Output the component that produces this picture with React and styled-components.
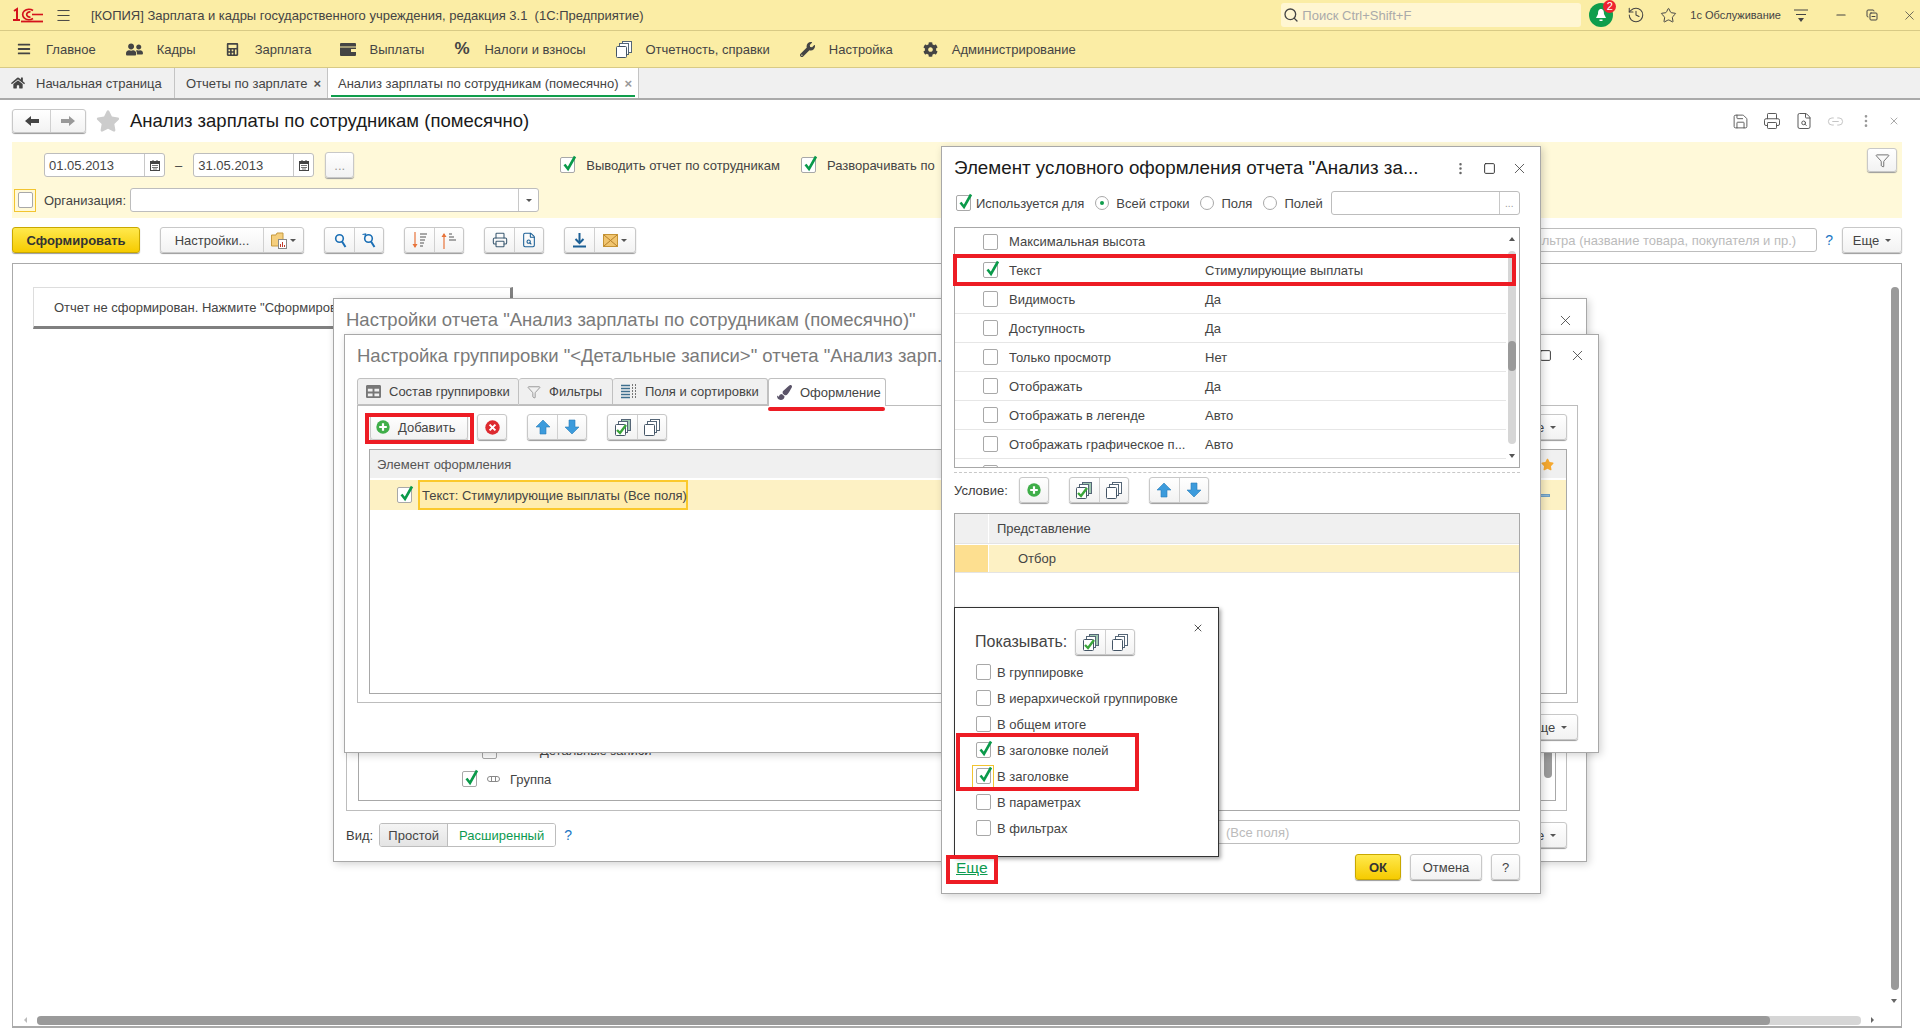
import React from 'react'
import styled, { createGlobalStyle } from 'styled-components'
import { FaBars, FaUserFriends, FaCalculator, FaWrench, FaCog, FaHome, FaStar, FaPaintBrush, FaTable } from 'react-icons/fa'
import { Search, History, Star, Printer, FileSearch, Link2, MoreVertical, X, Minus, Filter, Square, Menu, Save, CopyMinus } from 'lucide-react'

const GlobalStyle = createGlobalStyle`
  html, body { margin: 0; padding: 0; background: #fff; }
  body { font-family: "Liberation Sans", Arial, sans-serif; font-size: 13px; color: #3c3c3c; }
  * { box-sizing: border-box; }
`

const Page = styled.div`
  position: relative;
  width: 1920px;
  height: 1028px;
  overflow: hidden;
  background: #fff;
  display: flex;
  flex-direction: column;
`

/* ---------- верхние панели ---------- */
const TitleBar = styled.div`
  height: 31px;
  flex: none;
  background: #fbeda5;
  border-bottom: 1px solid #d8ca85;
  display: flex;
  align-items: center;
  padding-left: 12px;
  color: #444;
`
const TitleText = styled.span`
  margin-left: 19px;
  white-space: pre;
`
const TitleSearch = styled.div`
  margin-left: auto;
  width: 300px;
  height: 24px;
  background: #fff6d2;
  border-radius: 3px;
  display: flex;
  align-items: center;
  gap: 3px;
  padding-left: 2px;
  color: #aaa;
`
const TitleIcons = styled.div`
  display: flex;
  align-items: center;
  height: 100%;
  color: #444;
  margin-left: 8px;
`
const Bell = styled.div`
  position: relative;
  width: 24px;
  height: 24px;
  border-radius: 50%;
  background: #0f9d4c;
  display: flex;
  align-items: center;
  justify-content: center;
`
const Badge = styled.span`
  position: absolute;
  top: -3px;
  right: -3px;
  width: 13px;
  height: 13px;
  border-radius: 50%;
  background: #ee2230;
  color: #fff;
  font-size: 11px;
  line-height: 13px;
  text-align: center;
`
const Slot = styled.span`
  display: inline-flex;
  align-items: center;
  justify-content: center;
  margin-left: ${p => p.$ml || 0}px;
  width: ${p => (p.$w ? p.$w + 'px' : 'auto')};
  font-size: ${p => p.$fs || 13}px;
  white-space: nowrap;
`
const MenuBar = styled.div`
  height: 37px;
  flex: none;
  background: #fbeda5;
  border-bottom: 1px solid #d8ca85;
  display: flex;
  align-items: center;
  padding-left: 17px;
  color: #444;
`
const MenuItem = styled.div`
  display: flex;
  align-items: center;
  gap: ${p => p.$gap || 14}px;
  margin-right: ${p => p.$mr || 30}px;
  color: #444;
`
const Percent = styled.span`
  font-size: 17px;
  font-weight: bold;
  width: 16px;
`
const TabBar = styled.div`
  height: 32px;
  flex: none;
  background: #f0f0f0;
  border-bottom: 2px solid #aaa;
  display: flex;
`
const PageTab = styled.div`
  position: relative;
  width: ${p => p.$w}px;
  display: flex;
  align-items: center;
  padding-left: ${p => p.$pl}px;
  gap: ${p => p.$gap}px;
  background: ${p => (p.$active ? '#fff' : 'transparent')};
  border-right: 1px solid #c4c4c4;
  color: #444;
  white-space: nowrap;
  ${p => p.$active && `
    &::after {
      content: "";
      position: absolute;
      left: 3px; right: 3px; bottom: 1px;
      height: 2px;
      background: #0f9d4c;
    }
  `}
`
const TabClose = styled.span`
  font-size: 13px;
  color: ${p => p.$dim ? '#999' : '#555'};
  font-weight: bold;
`

/* ---------- форма отчета ---------- */
const Form = styled.div`
  flex: 1;
  min-height: 0;
  display: flex;
  flex-direction: column;
  padding-left: 12px;
  padding-right: 18px;
`
const FormHead = styled.div`
  height: 42px;
  flex: none;
  display: flex;
  align-items: center;
`
const FormTitle = styled.div`
  font-size: 18.5px;
  color: #1a1a1a;
  margin-left: 10px;
`
const HeadTools = styled.div`
  margin-left: auto;
  display: flex;
  align-items: center;
  gap: 14px;
  color: #555;
  padding-right: 2px;
`
const Btn = styled.div`
  height: ${p => p.$h || 26}px;
  width: ${p => (p.$w ? p.$w + 'px' : 'auto')};
  flex: none;
  display: inline-flex;
  align-items: center;
  justify-content: ${p => p.$start ? 'flex-start' : 'center'};
  padding-left: ${p => p.$start ? 5 : 0}px;
  margin-left: ${p => p.$ml || 0}px;
  background: linear-gradient(#fff, #f2f2f2);
  border: 1px solid #c8c8c8;
  border-radius: 3px;
  box-shadow: 0 1px 1px #9a9a9a;
  color: #444;
  white-space: nowrap;
`
const YellowBtn = styled(Btn)`
  background: linear-gradient(#ffe94d, #f6cb00);
  border-color: #c9a800;
  color: #333;
  font-weight: bold;
`
const PanelFilterBtn = styled(Btn)`
  margin-top: -4px;
  margin-right: 5px;
`
const BtnGroup = styled.div`
  display: inline-flex;
  flex: none;
  height: ${p => p.$h || 26}px;
  margin-left: ${p => p.$ml || 0}px;
  background: linear-gradient(#fff, #f2f2f2);
  border: 1px solid #c8c8c8;
  border-radius: 3px;
  box-shadow: 0 1px 1px #9a9a9a;
  & > * + * { border-left: 1px solid #d0d0d0; }
`
const GroupCell = styled.div`
  width: ${p => p.$w || 29}px;
  display: flex;
  align-items: center;
  justify-content: center;
  gap: 3px;
  color: #444;
  white-space: nowrap;
`
const DropCaret = styled.span`
  display: inline-block;
  width: 0;
  height: 0;
  border-left: 3px solid transparent;
  border-right: 3px solid transparent;
  border-top: 3px solid #555;
  margin-left: ${p => p.$ml || 0}px;
`
const FilterPanel = styled.div`
  height: 76px;
  flex: none;
  background: #fff9d9;
  display: flex;
  padding-top: 10px;
`
const FilterCol = styled.div`
  display: flex;
  flex-direction: column;
  gap: 10px;
`
const FilterRow = styled.div`
  display: flex;
  align-items: center;
  height: ${p => p.$h}px;
`
const Input = styled.div`
  height: 24px;
  width: ${p => (p.$w ? p.$w + 'px' : 'auto')};
  margin-left: ${p => p.$ml || 0}px;
  flex: none;
  background: #fff;
  border: 1px solid #bdbdbd;
  border-radius: 3px;
  display: flex;
  align-items: center;
  color: #444;
  overflow: hidden;
`
const InputText = styled.span`
  flex: 1;
  padding-left: ${p => p.$pl ?? 4}px;
  color: ${p => p.$color || '#444'};
  white-space: nowrap;
  text-align: ${p => p.$right ? 'right' : 'left'};
  padding-right: ${p => p.$right ? 20 : 0}px;
`
const InputEnd = styled.span`
  width: 20px;
  height: 100%;
  border-left: 1px solid #c8c8c8;
  display: flex;
  align-items: center;
  justify-content: center;
  color: #999;
  font-size: 10px;
`
const Box = styled.span`
  position: relative;
  display: inline-block;
  flex: none;
  width: 15px;
  height: 16px;
  margin-left: ${p => p.$ml || 0}px;
  background: #fff;
  border: 1px solid #a8a8a8;
  border-radius: 2px;
`
const BoxCheck = styled.svg`
  position: absolute;
  left: 1px;
  top: -3px;
`
const Label = styled.span`
  margin-left: ${p => p.$ml ?? 0}px;
  color: ${p => p.$color || '#444'};
  white-space: nowrap;
`
const FocusRing = styled.span`
  width: 22px;
  height: 23px;
  margin-left: 2px;
  display: flex;
  align-items: center;
  justify-content: center;
  border: 1px solid #f2c430;
`
const CommandBar = styled.div`
  height: 26px;
  flex: none;
  margin-top: 9px;
  display: flex;
  align-items: center;
`
const ReportArea = styled.div`
  position: relative;
  flex: 1;
  margin-top: 10px;
  border: 1px solid #aaa;
  border-bottom: 2px solid #aaa;
  padding: 23px 0 0 20px;
`
const Message = styled.div`
  width: 480px;
  height: 42px;
  background: #fff;
  border: 1px solid #ddd;
  border-right: 3px solid #808080;
  border-bottom: 3px solid #808080;
  display: flex;
  align-items: center;
  padding-left: 20px;
  color: #444;
  white-space: nowrap;
`
const VScroll = styled.div`
  position: absolute;
  top: 23px;
  right: 2px;
  bottom: 36px;
  width: 8px;
  border-radius: 4px;
  background: #9a9a9a;
`
const HScroll = styled.div`
  position: absolute;
  left: 24px;
  right: 40px;
  bottom: 1px;
  height: 9px;
  border-radius: 4px;
  background: #d6d6d6;
  &::before {
    content: "";
    position: absolute;
    left: 0;
    top: 0;
    bottom: 0;
    width: 1733px;
    border-radius: 4px;
    background: #9a9a9a;
  }
`
const ScrollTip = styled.span`
  position: absolute;
  width: 0;
  height: 0;
  ${p => p.$dir === 'down' && `
    right: 4px; bottom: 23px;
    border-left: 3px solid transparent;
    border-right: 3px solid transparent;
    border-top: 4px solid #666;
  `}
  ${p => p.$dir === 'left' && `
    left: 11px; bottom: 3px;
    border-top: 3px solid transparent;
    border-bottom: 3px solid transparent;
    border-right: 3px solid #bbb;
  `}
  ${p => p.$dir === 'right' && `
    right: 27px; bottom: 3px;
    border-top: 3px solid transparent;
    border-bottom: 3px solid transparent;
    border-left: 3px solid #666;
  `}
`

/* ---------- окна ---------- */
const Window = styled.div`
  position: absolute;
  left: ${p => p.$x}px;
  top: ${p => p.$y}px;
  width: ${p => p.$w}px;
  height: ${p => p.$h}px;
  background: #fff;
  border: 1px solid #a8a8a8;
  box-shadow: 2px 2px 8px rgba(0, 0, 0, 0.18);
  display: flex;
  flex-direction: column;
`
const WinHead = styled.div`
  height: ${p => p.$h || 44}px;
  flex: none;
  display: flex;
  align-items: center;
  padding-left: 12px;
  padding-right: 12px;
  padding-bottom: 2px;
`
const WinTitle = styled.div`
  font-size: ${p => p.$size || 18.5}px;
  white-space: nowrap;
  color: ${p => p.$dim ? '#7a7a7a' : '#1a1a1a'};
`
const WinTools = styled.div`
  margin-left: auto;
  display: flex;
  align-items: center;
  gap: ${p => p.$gap || 14}px;
  color: #333;
`
const OuterPanel = styled.div`
  flex: 1;
  margin: 0 19px 0 12px;
  padding: 0 10px 9px 11px;
  border: 1px solid #bdbdbd;
  border-top: none;
  display: flex;
`
const InnerPanel = styled.div`
  position: relative;
  flex: 1;
  border: 1px solid #a8a8a8;
  border-top: none;
  display: flex;
  flex-direction: column;
  justify-content: flex-end;
  padding-bottom: 7px;
`
const TreeRow = styled.div`
  height: ${p => p.$h || 29}px;
  display: flex;
  align-items: center;
  padding-left: ${p => p.$pl}px;
  gap: ${p => p.$gap}px;
  color: #444;
`
const SmallScroll = styled.div`
  position: absolute;
  right: 3px;
  bottom: 22px;
  width: 8px;
  height: 60px;
  border-radius: 4px;
  background: #9a9a9a;
`
const BottomRow = styled.div`
  height: 50px;
  flex: none;
  display: flex;
  align-items: center;
  padding: 0 ${p => p.$pr || 19}px 2px 12px;
`
const Switch = styled.div`
  display: flex;
  height: 24px;
  margin-left: 6px;
  border: 1px solid #bdbdbd;
  border-radius: 3px;
  overflow: hidden;
`
const SwitchPart = styled.div`
  width: ${p => p.$w}px;
  display: flex;
  align-items: center;
  justify-content: center;
  color: ${p => p.$on ? '#0d9a50' : '#444'};
  background: ${p => p.$on ? '#fff' : 'linear-gradient(#f4f4f4, #e4e4e4)'};
  border-right: ${p => p.$on ? 'none' : '1px solid #bdbdbd'};
`
const Help = styled.span`
  margin-left: 8px;
  font-size: 14px;
  color: #1b76c4;
`
const Push = styled.span`
  margin-left: auto;
`

const DlgTabs = styled.div`
  height: 27px;
  flex: none;
  display: flex;
  margin-left: 12px;
`
const DlgTab = styled.div`
  width: ${p => p.$w}px;
  display: flex;
  align-items: center;
  gap: 8px;
  padding-left: 8px;
  color: #444;
  background: ${p => p.$active ? '#fff' : '#f0f0f0'};
  border: 1px solid #c0c0c0;
  border-bottom: ${p => p.$active ? 'none' : '1px solid #c0c0c0'};
  border-left: ${p => p.$first || p.$active ? '1px solid #c0c0c0' : 'none'};
  border-radius: 3px 3px 0 0;
  margin-bottom: ${p => p.$active ? '-1px' : 0};
  position: relative;
  z-index: 1;
`
const TabPanel = styled.div`
  width: 1221px;
  height: 298px;
  flex: none;
  margin-left: 12px;
  border: 1px solid #bdbdbd;
  padding: 8px 10px 8px 11px;
  display: flex;
  flex-direction: column;
`
const Toolbar = styled.div`
  height: 26px;
  flex: none;
  display: flex;
  align-items: center;
`
const Table = styled.div`
  flex: 1;
  margin-top: 9px;
  border: 1px solid #a8a8a8;
  display: flex;
  flex-direction: column;
`
const HeadRow = styled.div`
  height: 29px;
  flex: none;
  background: #f0f0f0;
  display: flex;
  align-items: center;
  padding-left: 7px;
  padding-right: 12px;
  color: #555;
  border-bottom: 1px solid #fff;
`
const SelRow = styled.div`
  height: 30px;
  flex: none;
  margin-top: 1px;
  background: #fdf1c4;
  display: flex;
  align-items: center;
  color: #444;
  padding-right: 16px;
`
const ActiveCell = styled.div`
  width: 270px;
  height: 100%;
  margin-left: 6px;
  display: flex;
  align-items: center;
  padding-left: 2px;
  background: #ffedae;
  border: 2px solid #fbc92c;
  white-space: nowrap;
`
const MinusBar = styled.span`
  margin-left: auto;
  width: 12px;
  height: 3px;
  background: #8db8d8;
  border: 1px solid #6fa0c5;
`

/* ---------- окно условного оформления ---------- */
const DlgBody = styled.div`
  flex: 1;
  min-height: 0;
  padding: 0 20px 0 12px;
  display: flex;
  flex-direction: column;
`
const UseRow = styled.div`
  height: 24px;
  flex: none;
  display: flex;
  align-items: center;
`
const Radio = styled.span`
  flex: none;
  width: 14px;
  height: 14px;
  margin-left: ${p => p.$ml || 0}px;
  border-radius: 50%;
  border: 1px solid #a8a8a8;
  background: #fff;
  display: flex;
  align-items: center;
  justify-content: center;
  &::after {
    content: "";
    display: ${p => p.$on ? 'block' : 'none'};
    width: 4px;
    height: 4px;
    border-radius: 50%;
    background: #0f9d4c;
  }
`
const PropTable = styled.div`
  position: relative;
  height: 241px;
  flex: none;
  margin-top: 12px;
  border: 1px solid #a8a8a8;
  overflow: hidden;
`
const PropRow = styled.div`
  height: 29px;
  display: grid;
  grid-template-columns: 26px 196px 1fr;
  align-items: center;
  margin-right: 13px;
  padding-left: 28px;
  border-bottom: 1px solid ${p => p.$plain ? 'transparent' : '#e6e6e6'};
  color: #444;
  white-space: nowrap;
  &:first-child { height: 28px; }
`
const ScrollTrack = styled.div`
  position: absolute;
  right: 3px;
  top: 23px;
  bottom: 23px;
  width: 8px;
  border-radius: 4px;
  background: #d6d6d6;
  &::after {
    content: "";
    position: absolute;
    left: 0;
    right: 0;
    top: 90px;
    height: 30px;
    border-radius: 4px;
    background: #9a9a9a;
  }
`
const ArrowTip = styled.span`
  position: absolute;
  right: 4px;
  ${p => p.$up ? 'top: 9px;' : 'bottom: 9px;'}
  width: 0;
  height: 0;
  border-left: 3px solid transparent;
  border-right: 3px solid transparent;
  ${p => p.$up ? 'border-bottom: 4px solid #555;' : 'border-top: 4px solid #555;'}
`
const DashLine = styled.div`
  height: 0;
  flex: none;
  margin-top: 4px;
  border-top: 1px dashed #c8c8c8;
`
const CondRow = styled.div`
  height: 26px;
  flex: none;
  margin-top: 4px;
  display: flex;
  align-items: center;
`
const CondTable = styled.div`
  height: 298px;
  flex: none;
  margin-top: 10px;
  border: 1px solid #a8a8a8;
`
const CondCells = styled.div`
  height: ${p => p.$h}px;
  margin-top: ${p => p.$mt || 0}px;
  display: grid;
  grid-template-columns: 33px 1fr;
  column-gap: 1px;
  align-items: stretch;
  border-bottom: 1px solid #e4e4e4;
`
const Cell = styled.div`
  display: flex;
  align-items: center;
  padding-left: ${p => p.$pl || 0}px;
  background: ${p => p.$bg};
  color: #444;
`
const ResultInput = styled(Input)`
  margin-top: 9px;
  padding-left: 271px;
`
const DlgFooter = styled.div`
  height: 26px;
  flex: none;
  margin-top: 10px;
  display: flex;
  align-items: center;
  justify-content: flex-end;
  gap: 9px;
`
const MoreLink = styled.a`
  position: absolute;
  left: 14px;
  bottom: 16px;
  font-size: 15.5px;
  color: #0d9a50;
  text-decoration: underline;
`
const Popup = styled.div`
  position: absolute;
  left: 954px;
  top: 607px;
  width: 265px;
  height: 250px;
  background: #fff;
  border: 1px solid #333;
  box-shadow: 2px 2px 4px rgba(0, 0, 0, 0.35);
  padding: 21px 0 0 21px;
`
const PopClose = styled.span`
  position: absolute;
  top: 14px;
  right: 14px;
  color: #555;
`
const PopHead = styled.div`
  display: flex;
  align-items: center;
  height: 26px;
  margin-left: -1px;
  margin-bottom: 4px;
  font-size: 16px;
  color: #444;
`
const PopRow = styled.div`
  height: 26px;
  display: flex;
  align-items: center;
  gap: 6px;
  margin-left: ${p => p.$focus ? -4 : 0}px;
  color: #444;
  & > ${FocusRing} { margin: 0 -3px 0 0; }
`
const RedFrame = styled.div`
  position: absolute;
  left: ${p => p.$x}px;
  top: ${p => p.$y}px;
  width: ${p => p.$w}px;
  height: ${p => p.$h}px;
  border: 4px solid #ed1c24;
`
const RedLine = styled.div`
  position: absolute;
  left: 768px;
  top: 407px;
  width: 117px;
  height: 4px;
  border-radius: 2px;
  background: #ed1c24;
`

/* ---------- рисунки ---------- */
const Checked = ({ ml }) => (
  <Box $ml={ml}>
    <BoxCheck width="15" height="18" viewBox="0 0 15 18">
      <path d="M2.5 9.5 L6 14 L13 1.5" fill="none" stroke="#0a9a4a" strokeWidth="2.6" />
    </BoxCheck>
  </Box>
)

const Logo = () => (
  <svg width="32" height="16" viewBox="0 0 32 16">
    <path d="M2 4 L5 2 V13 M1 13 H8" fill="none" stroke="#d4121c" strokeWidth="2" />
    <path d="M21 3.5 A6.3 5.2 0 1 0 21 11.5 M18.5 5 A3 2.6 0 1 0 18.5 10" fill="none" stroke="#d4121c" strokeWidth="1.7" />
    <path d="M9 14.5 H31" stroke="#d4121c" strokeWidth="1.8" />
    <path d="M20 7.500 H31" stroke="#d4121c" strokeWidth="1.6" />
  </svg>
)

const Calendar = () => (
  <svg width="10" height="11" viewBox="0 0 10 11">
    <rect x="0.5" y="1.5" width="9" height="9" fill="none" stroke="#444" />
    <rect x="0.5" y="1.5" width="9" height="2.5" fill="#444" />
    <path d="M2 5.5h6M2 7.5h6M3 9h4" stroke="#777" />
    <path d="M3 0v2M7 0v2" stroke="#444" />
  </svg>
)

const Pages = ({ checked }) => (
  <svg width="16" height="17" viewBox="0 0 16 17">
    <rect x="6.5" y="0.5" width="9" height="11" fill={checked ? '#9fc9b0' : '#fff'} stroke="#567" />
    <rect x="3.5" y="2.5" width="9" height="11" fill="#fff" stroke="#567" />
    <rect x="0.5" y="5.5" width="10" height="11" rx="1" fill="#fff" stroke="#456" />
    {checked && <path d="M2 11 L5 14 L11 6" fill="none" stroke="#3aa53a" strokeWidth="2.4" />}
  </svg>
)

const Arrow = ({ down }) => (
  <svg width="14" height="16" viewBox="0 0 14 16">
    <path
      d={down ? 'M4 1 H10 V8 H14 L7 15 L0 8 H4 Z' : 'M4 15 H10 V8 H14 L7 1 L0 8 H4 Z'}
      fill="#3c9bdc"
      stroke="#2a7db8"
      strokeWidth="0.6"
    />
  </svg>
)

const PlusCircle = () => (
  <svg width="14" height="14" viewBox="0 0 14 14">
    <circle cx="7" cy="7" r="6.7" fill="#3fae49" />
    <path d="M7 3.2v7.6M3.2 7h7.6" stroke="#fff" strokeWidth="2.2" />
  </svg>
)

const CrossCircle = () => (
  <svg width="15" height="15" viewBox="0 0 15 15">
    <circle cx="7.5" cy="7.5" r="7.2" fill="#dd2a2f" />
    <path d="M4.6 4.6l5.8 5.8M10.4 4.6l-5.8 5.8" stroke="#fff" strokeWidth="2" />
  </svg>
)

const BlueSearch = ({ refresh }) => (
  <svg width="14" height="15" viewBox="0 0 14 15">
    <circle cx="6.5" cy="5.5" r="3.8" fill="none" stroke="#1b6fb5" strokeWidth="1.6" />
    <path d="M9 8.5 L12.500 14" stroke="#1b6fb5" strokeWidth="2" />
    {refresh && <path d="M0.5 1.5 L3.5 1 L3 3.500" fill="none" stroke="#1b6fb5" strokeWidth="1.2" />}
  </svg>
)

const SortIcon = ({ up }) => (
  <svg width="16" height="17" viewBox="0 0 16 17">
    <path d={up ? 'M3 17 V2' : 'M3 0 V15'} stroke="#e8743b" strokeWidth="1.2" />
    <path d={up ? 'M0.5 5 L3 1 L5.5 5 Z' : 'M0.5 12 L3 16 L5.5 12 Z'} fill="#e8743b" />
    {up
      ? <path d="M8 2h3M8 5h5M8 8h7" stroke="#555" strokeWidth="1.2" />
      : <path d="M8 2h7M8 5h6M8 8h5M8 11h4M8 14h3" stroke="#555" strokeWidth="1.2" />}
  </svg>
)

const Download = () => (
  <svg width="15" height="16" viewBox="0 0 15 16">
    <path d="M7.5 1v9" stroke="#1b5f95" strokeWidth="2" />
    <path d="M3.5 7 L7.5 11 L11.5 7" fill="none" stroke="#1b5f95" strokeWidth="2" />
    <path d="M1 14.5h13" stroke="#1b5f95" strokeWidth="2" />
  </svg>
)

const Mail = () => (
  <svg width="15" height="13" viewBox="0 0 15 13">
    <rect x="0.5" y="0.5" width="14" height="12" fill="#f1c56f" stroke="#c59334" />
    <path d="M1 1 L14 12 M14 1 L1 12" stroke="#b5802a" />
  </svg>
)

const Folder = () => (
  <svg width="16" height="17" viewBox="0 0 16 17">
    <path d="M0.5 3 H5 L6 1 H12 V14 H0.5 Z" fill="#f5cf7e" stroke="#c69a3e" />
    <rect x="7.5" y="7.5" width="8" height="9" fill="#fff" stroke="#888" />
    <path d="M9.5 15v-3M11.5 15v-5M13.5 15v-2" stroke="#c0392b" />
  </svg>
)

const FieldsIcon = () => (
  <svg width="16" height="15" viewBox="0 0 16 15">
    <path d="M0 1.5h9M0 4.5h9M0 7.5h9M0 10.5h9M0 13.5h9" stroke="#3e6f8e" strokeWidth="1.6" />
    <path d="M11.5 0v15M14.5 0v15" stroke="#777" strokeWidth="1" strokeDasharray="2 1" />
  </svg>
)

const GroupIcon = () => (
  <svg width="13" height="6" viewBox="0 0 13 6">
    <rect x="0.5" y="0.5" width="12" height="5" rx="2.5" fill="none" stroke="#888" />
    <path d="M4.5 0.5v5M8.5 0.5v5" stroke="#888" />
  </svg>
)

const propRows = [
  ['Максимальная высота', ''],
  ['Текст', 'Стимулирующие выплаты', true],
  ['Видимость', 'Да'],
  ['Доступность', 'Да'],
  ['Только просмотр', 'Нет'],
  ['Отображать', 'Да'],
  ['Отображать в легенде', 'Авто'],
  ['Отображать графическое п...', 'Авто'],
  ['', '']
]

const showRows = [
  ['В группировке'],
  ['В иерархической группировке'],
  ['В общем итоге'],
  ['В заголовке полей', true],
  ['В заголовке', true, true],
  ['В параметрах'],
  ['В фильтрах']
]

export default function App() {
  return (
    <Page>
      <GlobalStyle />

      <TitleBar>
        <Logo />
        <Slot $ml={11}><Menu size={17} strokeWidth={1.4} /></Slot>
        <TitleText>[КОПИЯ] Зарплата и кадры государственного учреждения, редакция 3.1  (1С:Предприятие)</TitleText>
        <TitleSearch><Search size={16} color="#444" />Поиск Ctrl+Shift+F</TitleSearch>
        <TitleIcons>
          <Bell>
            <svg width="12" height="14" viewBox="0 0 12 14">
              <path d="M6 1 C3.5 1 3 3.5 3 6 L1 10 H11 L9 6 C9 3.5 8.5 1 6 1 Z M4.500 11.5 H7.500 V13 H4.500 Z" fill="#fff" />
            </svg>
            <Badge>2</Badge>
          </Bell>
          <Slot $ml={14}><History size={18} strokeWidth={1.4} /></Slot>
          <Slot $ml={15}><Star size={17} strokeWidth={1.4} /></Slot>
          <Slot $ml={13} $fs={11}>1с Обслуживание</Slot>
          <Slot $ml={13}><svg width="14" height="15" viewBox="0 0 14 15"><path d="M0 2h14M2 6.500h10" stroke="#444" /><path d="M4 10h6l-3 4z" fill="#444" /></svg></Slot>
          <Slot $ml={26}><Minus size={14} /></Slot>
          <Slot $ml={18}><CopyMinus size={12} /></Slot>
          <Slot $ml={20} $w={22}><X size={15} strokeWidth={1.2} /></Slot>
        </TitleIcons>
      </TitleBar>

      <MenuBar>
        <MenuItem $gap={15}><FaBars size={14} />Главное</MenuItem>
        <MenuItem><FaUserFriends size={17} />Кадры</MenuItem>
        <MenuItem $gap={16} $mr={28}><FaCalculator size={13} />Зарплата</MenuItem>
        <MenuItem>
          <svg width="16" height="13" viewBox="0 0 16 13"><rect width="16" height="13" rx="1" fill="#444" /><path d="M0 4h16" stroke="#fbeda5" /><rect x="11" y="6" width="5" height="3" fill="#fbeda5" /></svg>
          Выплаты
        </MenuItem>
        <MenuItem><Percent>%</Percent>Налоги и взносы</MenuItem>
        <MenuItem><Pages />Отчетность, справки</MenuItem>
        <MenuItem><FaWrench size={15} />Настройка</MenuItem>
        <MenuItem><FaCog size={15} />Администрирование</MenuItem>
      </MenuBar>

      <TabBar>
        <PageTab $w={175} $pl={11} $gap={11}><FaHome size={14} />Начальная страница</PageTab>
        <PageTab $w={153} $pl={11} $gap={6}>Отчеты по зарплате<TabClose>×</TabClose></PageTab>
        <PageTab $w={311} $pl={10} $gap={6} $active>Анализ зарплаты по сотрудникам (помесячно)<TabClose $dim>×</TabClose></PageTab>
      </TabBar>

      <Form>
        <FormHead>
          <BtnGroup $h={24}>
            <GroupCell $w={37}>
              <svg width="14" height="10" viewBox="0 0 14 10"><path d="M0 5 L6 0 V3 H14 V7 H6 V10 Z" fill="#444" /></svg>
            </GroupCell>
            <GroupCell $w={35}>
              <svg width="14" height="10" viewBox="0 0 14 10"><path d="M14 5 L8 0 V3 H0 V7 H8 V10 Z" fill="#999" /></svg>
            </GroupCell>
          </BtnGroup>
          <Slot $ml={10}><FaStar size={24} color="#ccc" /></Slot>
          <FormTitle>Анализ зарплаты по сотрудникам (помесячно)</FormTitle>
          <HeadTools>
            <Save size={17} strokeWidth={1.3} />
            <Printer size={18} strokeWidth={1.3} />
            <FileSearch size={18} strokeWidth={1.3} />
            <Link2 size={17} strokeWidth={1.2} color="#bbb" />
            <MoreVertical size={16} color="#999" />
            <X size={12} color="#aaa" />
          </HeadTools>
        </FormHead>

        <FilterPanel>
          <FilterCol>
            <FilterRow $h={26}>
              <Input $w={121} $ml={32}><InputText>01.05.2013</InputText><InputEnd><Calendar /></InputEnd></Input>
              <Label $ml={10}>–</Label>
              <Input $w={121} $ml={11}><InputText>31.05.2013</InputText><InputEnd><Calendar /></InputEnd></Input>
              <Btn $w={29} $ml={11}><Label $color="#999">...</Label></Btn>
              <Checked ml={206} />
              <Label $ml={11}>Выводить отчет по сотрудникам</Label>
              <Checked ml={21} />
              <Label $ml={11}>Разворачивать по</Label>
            </FilterRow>
            <FilterRow $h={24}>
              <FocusRing><Box /></FocusRing>
              <Label $ml={8}>Организация:</Label>
              <Input $w={409} $ml={4}><InputText /><InputEnd><DropCaret /></InputEnd></Input>
            </FilterRow>
          </FilterCol>
          <Push />
          <PanelFilterBtn $w={30} $h={24}><Filter size={15} strokeWidth={1.3} color="#555" /></PanelFilterBtn>
        </FilterPanel>

        <CommandBar>
          <YellowBtn $w={128}>Сформировать</YellowBtn>
          <BtnGroup $ml={20}>
            <GroupCell $w={102}>Настройки...</GroupCell>
            <GroupCell $w={40}><Folder /><DropCaret /></GroupCell>
          </BtnGroup>
          <BtnGroup $ml={20}><GroupCell><BlueSearch /></GroupCell><GroupCell><BlueSearch refresh /></GroupCell></BtnGroup>
          <BtnGroup $ml={20}><GroupCell><SortIcon /></GroupCell><GroupCell><SortIcon up /></GroupCell></BtnGroup>
          <BtnGroup $ml={20}>
            <GroupCell><Printer size={16} strokeWidth={1.6} color="#3d5b73" /></GroupCell>
            <GroupCell><FileSearch size={16} strokeWidth={1.6} color="#1b5f95" /></GroupCell>
          </BtnGroup>
          <BtnGroup $ml={20}>
            <GroupCell><Download /></GroupCell>
            <GroupCell $w={41}><Mail /><DropCaret /></GroupCell>
          </BtnGroup>
          <Push />
          <Input $w={415}><InputText $right $color="#bbb">Текст фильтра (название товара, покупателя и пр.)</InputText></Input>
          <Help>?</Help>
          <Btn $w={60} $ml={9}>Еще<DropCaret $ml={6} /></Btn>
        </CommandBar>

        <ReportArea>
          <Message>Отчет не сформирован. Нажмите "Сформировать".</Message>
          <VScroll />
          <HScroll />
          <ScrollTip $dir="down" />
          <ScrollTip $dir="left" />
          <ScrollTip $dir="right" />
        </ReportArea>
      </Form>

      {/* Настройки отчета */}
      <Window $x={333} $y={298} $w={1254} $h={564}>
        <WinHead>
          <WinTitle $dim>Настройки отчета "Анализ зарплаты по сотрудникам (помесячно)"</WinTitle>
          <WinTools><X size={17} strokeWidth={1.1} /></WinTools>
        </WinHead>
        <OuterPanel>
          <InnerPanel>
            <TreeRow $pl={123} $gap={43}><Box />Детальные записи</TreeRow>
            <TreeRow $pl={103} $gap={10} $h={28}><Checked /><GroupIcon />Группа</TreeRow>
            <SmallScroll />
          </InnerPanel>
        </OuterPanel>
        <BottomRow>
          Вид:
          <Switch>
            <SwitchPart $w={68}>Простой</SwitchPart>
            <SwitchPart $w={107} $on>Расширенный</SwitchPart>
          </Switch>
          <Help>?</Help>
          <Push />
          <Btn $w={60}>Еще<DropCaret $ml={6} /></Btn>
        </BottomRow>
      </Window>

      {/* Настройка группировки */}
      <Window $x={344} $y={334} $w={1255} $h={419}>
        <WinHead $h={43}>
          <WinTitle $dim>Настройка группировки "&lt;Детальные записи&gt;" отчета "Анализ зарп...</WinTitle>
          <WinTools $gap={17}>
            <Square size={13} strokeWidth={1.8} />
            <X size={17} strokeWidth={1.1} />
          </WinTools>
        </WinHead>
        <DlgTabs>
          <DlgTab $w={162} $first><FaTable size={15} color="#777" />Состав группировки</DlgTab>
          <DlgTab $w={94}><Filter size={14} strokeWidth={1.2} color="#777" />Фильтры</DlgTab>
          <DlgTab $w={155}><FieldsIcon />Поля и сортировки</DlgTab>
          <DlgTab $w={118} $active><FaPaintBrush size={15} color="#5a5368" />Оформление</DlgTab>
        </DlgTabs>
        <TabPanel>
          <Toolbar>
            <Btn $w={98} $ml={1} $start><PlusCircle /><Label $ml={8}>Добавить</Label></Btn>
            <Btn $w={30} $ml={9}><CrossCircle /></Btn>
            <BtnGroup $ml={20}><GroupCell><Arrow /></GroupCell><GroupCell><Arrow down /></GroupCell></BtnGroup>
            <BtnGroup $ml={20}><GroupCell><Pages checked /></GroupCell><GroupCell><Pages /></GroupCell></BtnGroup>
            <Push />
            <Btn $w={60}>Еще<DropCaret $ml={6} /></Btn>
          </Toolbar>
          <Table>
            <HeadRow>
              Элемент оформления
              <Push />
              <FaStar size={13} color="#f6a930" />
            </HeadRow>
            <SelRow>
              <Checked ml={27} />
              <ActiveCell>Текст: Стимулирующие выплаты (Все поля)</ActiveCell>
              <MinusBar />
            </SelRow>
          </Table>
        </TabPanel>
        <BottomRow $pr={20}>
          <Push />
          <Btn $w={60}>Еще<DropCaret $ml={6} /></Btn>
        </BottomRow>
      </Window>

      {/* Элемент условного оформления */}
      <Window $x={941} $y={146} $w={600} $h={748}>
        <WinHead>
          <WinTitle $size={18.8}>Элемент условного оформления отчета "Анализ за...</WinTitle>
          <WinTools $gap={15}>
            <MoreVertical size={15} color="#666" />
            <Square size={13} strokeWidth={1.8} />
            <X size={17} strokeWidth={1.1} />
          </WinTools>
        </WinHead>
        <DlgBody>
          <UseRow>
            <Checked ml={2} />
            <Label $ml={5}>Используется для</Label>
            <Radio $ml={11} $on />
            <Label $ml={7}>Всей строки</Label>
            <Radio $ml={11} />
            <Label $ml={7}>Поля</Label>
            <Radio $ml={11} />
            <Label $ml={7}>Полей</Label>
            <Input $w={189} $ml={8}><InputText /><InputEnd>...</InputEnd></Input>
          </UseRow>
          <PropTable>
            {propRows.map((r, i) => (
              <PropRow key={i} $plain={i === 8}>
                {r[2] ? <Checked /> : <Box />}
                <span>{r[0]}</span>
                <span>{r[1]}</span>
              </PropRow>
            ))}
            <ScrollTrack />
            <ArrowTip $up />
            <ArrowTip />
          </PropTable>
          <DashLine />
          <CondRow>
            Условие:
            <Btn $w={30} $ml={11}><PlusCircle /></Btn>
            <BtnGroup $ml={20}><GroupCell><Pages checked /></GroupCell><GroupCell><Pages /></GroupCell></BtnGroup>
            <BtnGroup $ml={20}><GroupCell><Arrow /></GroupCell><GroupCell><Arrow down /></GroupCell></BtnGroup>
          </CondRow>
          <CondTable>
            <CondCells $h={30}>
              <Cell $bg="#f0f0f0" />
              <Cell $bg="#f0f0f0" $pl={8}>Представление</Cell>
            </CondCells>
            <CondCells $h={28} $mt={1}>
              <Cell $bg="#fddf90" />
              <Cell $bg="#fdf1c4" $pl={29}>Отбор</Cell>
            </CondCells>
          </CondTable>
          <ResultInput><InputText $color="#bbb" $pl={0}>(Все поля)</InputText></ResultInput>
          <DlgFooter>
            <YellowBtn $w={46}>ОК</YellowBtn>
            <Btn $w={72}>Отмена</Btn>
            <Btn $w={29}>?</Btn>
          </DlgFooter>
        </DlgBody>
        <MoreLink>Еще</MoreLink>
      </Window>

      <Popup>
        <PopClose><X size={12} /></PopClose>
        <PopHead>
          Показывать:
          <BtnGroup $ml={8}><GroupCell><Pages checked /></GroupCell><GroupCell><Pages /></GroupCell></BtnGroup>
        </PopHead>
        {showRows.map((r, i) => (
          <PopRow key={i} $focus={r[2]}>
            {r[2] ? <FocusRing><Checked /></FocusRing> : r[1] ? <Checked /> : <Box />}
            {r[0]}
          </PopRow>
        ))}
      </Popup>

      <RedFrame $x={365} $y={413} $w={109} $h={31} />
      <RedLine />
      <RedFrame $x={953} $y={254} $w={563} $h={32} />
      <RedFrame $x={956} $y={733} $w={183} $h={58} />
      <RedFrame $x={946} $y={855} $w={52} $h={29} />
    </Page>
  )
}
